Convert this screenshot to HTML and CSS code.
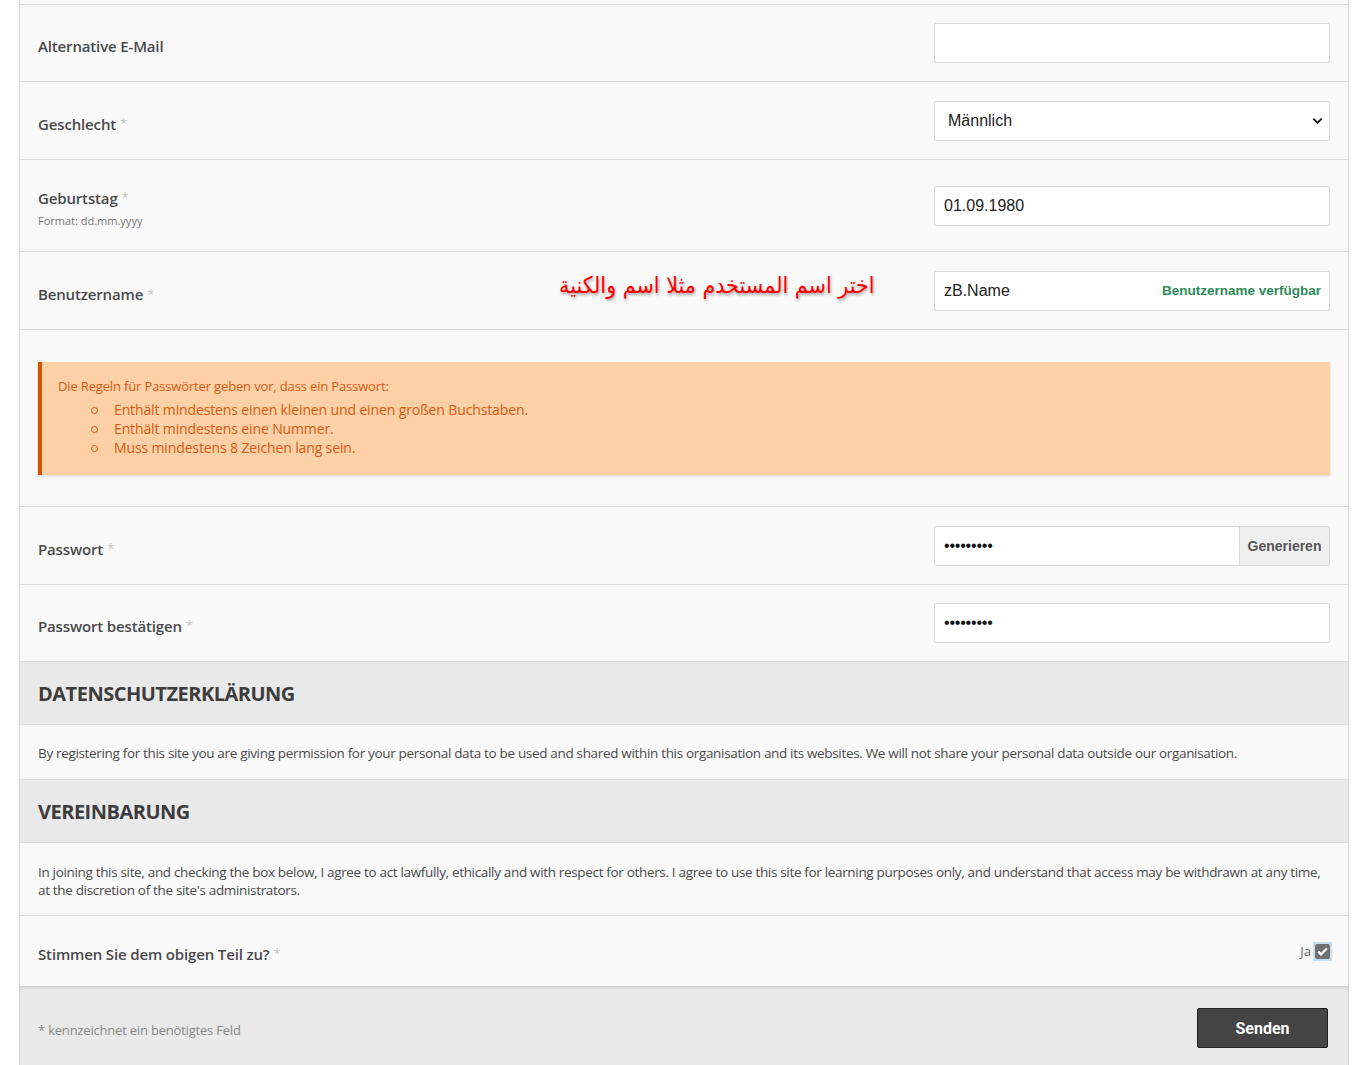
FILE: index.html
```html
<!DOCTYPE html>
<html lang="de">
<head>
<meta charset="utf-8">
<title>Registrierung</title>
<link rel="stylesheet" href="styles.css">
</head>
<body>
<div class="form">
  <div class="spacer"></div>
  <div class="row">
    <div class="label"><span class="lbl">Alternative E-Mail</span></div>
    <div class="field"><div class="input"></div></div>
  </div>
  <div class="row row-78">
    <div class="label"><span class="lbl">Geschlecht</span><span class="req">*</span></div>
    <div class="field"><div class="input select"><span>Männlich</span>
      <svg class="chev" width="12" height="8" viewBox="0 0 12 8"><path d="M1.5 1.5 L6 6 L10.5 1.5" fill="none" stroke="#111" stroke-width="2"/></svg></div></div>
  </div>
  <div class="row row-tall">
    <div class="label"><div><span class="lbl">Geburtstag</span><span class="req">*</span></div><div class="hint">Format: dd.mm.yyyy</div></div>
    <div class="field"><div class="input"><span>01.09.1980</span></div></div>
  </div>
  <div class="row row-78">
    <div class="label label-user"><span class="lbl">Benutzername</span><span class="req">*</span>
      <span class="arabic" dir="rtl">اختر اسم المستخدم مثلا اسم والكنية</span></div>
    <div class="field"><div class="input user"><span>zB.Name</span><span class="ok">Benutzername verfügbar</span></div></div>
  </div>
  <div class="row-alert">
    <div class="alert">
      <div class="alert-head">Die Regeln für Passwörter geben vor, dass ein Passwort:</div>
      <ul>
        <li>Enthält mindestens einen kleinen und einen großen Buchstaben.</li>
        <li>Enthält mindestens eine Nummer.</li>
        <li>Muss mindestens 8 Zeichen lang sein.</li>
      </ul>
    </div>
  </div>
  <div class="row row-78">
    <div class="label"><span class="lbl">Passwort</span><span class="req">*</span></div>
    <div class="field"><div class="input group"><span class="dots">•••••••••</span><span class="gen">Generieren</span></div></div>
  </div>
  <div class="row">
    <div class="label"><span class="lbl">Passwort bestätigen</span><span class="req">*</span></div>
    <div class="field"><div class="input"><span class="dots">•••••••••</span></div></div>
  </div>
  <div class="section-head">DATENSCHUTZERKLÄRUNG</div>
  <div class="section-text">By registering for this site you are giving permission for your personal data to be used and shared within this organisation and its websites. We will not share your personal data outside our organisation.</div>
  <div class="section-head">VEREINBARUNG</div>
  <div class="section-text two">In joining this site, and checking the box below, I agree to act lawfully, ethically and with respect for others. I agree to use this site for learning purposes only, and understand that access may be withdrawn at any time, at the discretion of the site's administrators.</div>
  <div class="row row-check">
    <div class="label"><span class="lbl">Stimmen Sie dem obigen Teil zu?</span><span class="req">*</span></div>
    <div class="check"><span class="ja">Ja</span><span class="cbwrap"><span class="cb"><svg width="11" height="9" viewBox="0 0 11 9"><path d="M1.2 4.6 L4 7.4 L9.8 1.4" fill="none" stroke="#fff" stroke-width="2.2"/></svg></span></span></div>
  </div>
  <div class="footer">
    <span class="note">* kennzeichnet ein benötigtes Feld</span>
    <span class="btn">Senden</span>
  </div>
</div>
</body>
</html>
```
FILE: styles.css
```css
* { box-sizing: border-box; }
html, body { margin: 0; padding: 0; background: #fff; }
body { font-family: "Open Sans", "Noto Sans", sans-serif; color: #444; }
.form {
  margin-left: 19px;
  width: 1330px;
  border-left: 1px solid #d6d6d6;
  border-right: 1px solid #d6d6d6;
  background: #f9f9f9;
  min-height: 1065px;
}
.spacer { height: 4px; }
.row {
  display: grid;
  grid-template-columns: 1fr 396px;
  align-items: center;
  border-top: 1px solid #dadada;
  padding: 18px 18px;
  min-height: 77px;
}
.row-78 { min-height: 78px; }
.row-tall { padding: 18px 18px; min-height: 92px; height: 92px; }
.label { padding-top: 6px; }
.lbl { font-size: 15px; font-weight: 600; color: #4a4a4a; letter-spacing: -0.15px; }
.req { font-size: 13px; color: #c4c4c4; margin-left: 4px; vertical-align: 2px; }
.hint { font-size: 11px; color: #777; margin-top: 4px; letter-spacing: 0; }
.row-tall .label { padding-top: 4px; }
.label-user { display: flex; align-items: center; padding-top: 0; }
.label-user .lbl { padding-top: 6px; }
.label-user .req { padding-top: 6px; }
.arabic {
  margin-left: auto;
  margin-right: 60px;
  margin-top: -12px;
  font-family: "DejaVu Sans", "Noto Sans", sans-serif;
  font-size: 23px;
  color: #ff0000;
  text-shadow: 1px 2px 3px rgba(0,0,0,0.35);
  transform: scaleX(0.9);
  transform-origin: right center;
}
.field { display: flex; }
.input {
  width: 396px;
  height: 40px;
  background: #fff;
  border: 1px solid #d9d9d9;
  border-radius: 2px;
  display: flex;
  align-items: center;
  padding: 0 9px;
  font-family: "Liberation Sans", Arial, sans-serif;
  font-size: 16px;
  color: #222;
}
.select { padding-left: 13px; justify-content: space-between; padding-right: 6px; }
.chev { width: 11px; }
.user { justify-content: space-between; padding-right: 8px; }
.ok { font-family: "Liberation Sans", Arial, sans-serif; font-weight: 700; font-size: 13.5px; color: #2e8b57; letter-spacing: 0; }
.group { padding-right: 0; justify-content: space-between; }
.dots { font-size: 16px; letter-spacing: -0.2px; color: #111; }
.gen {
  height: 38px;
  width: 90px;
  display: flex;
  align-items: center;
  justify-content: center;
  background: #efefef;
  border-left: 1px solid #d9d9d9;
  font-weight: 700;
  font-size: 14px;
  color: #555;
}
.row-alert { border-top: 1px solid #dadada; padding: 32px 18px 31px; }
.alert {
  background: #fed0a5;
  border-left: 4px solid #d35400;
  box-shadow: 0 1px 2px rgba(0,0,0,0.15);
  padding: 15px 16px 14px;
  color: #d95a14;
  height: 113px;
}
.alert-head { font-size: 13px; letter-spacing: -0.15px; line-height: 18px; }
.alert ul { margin: 5px 0 0; padding-left: 56px; list-style: none; font-size: 14px; line-height: 19px; letter-spacing: -0.13px; }
.alert li { position: relative; }
.alert li::before {
  content: "";
  position: absolute;
  left: -23px;
  top: 7px;
  width: 5px;
  height: 5px;
  border: 1px solid #d95a14;
  border-radius: 50%;
}
.section-head {
  background: #e9e9e9;
  border-top: 1px solid #dadada;
  height: 63px;
  padding: 0 18px;
  display: flex;
  align-items: center;
  font-size: 20px;
  font-weight: 700;
  color: #3d3d3d;
  letter-spacing: -0.5px;
}
.section-text {
  border-top: 1px solid #dadada;
  padding: 19px 18px 0;
  height: 55px;
  font-size: 13.5px;
  line-height: 18px;
  letter-spacing: -0.33px;
  color: #4a4a4a;
}
.section-text.two { height: 73px; padding-top: 20px; }
.row-check { min-height: 71px; padding: 15px 16px 15px 18px; }
.check { display: flex; justify-content: flex-end; align-items: center; margin-top: 0; }
.ja { font-size: 13px; color: #666; margin-right: 2px; }
.cbwrap { background: #c7dff5; padding: 2px; display: flex; }
.cb { width: 15px; height: 15px; background: #707070; border-radius: 2px; display: flex; align-items: center; justify-content: center; }
.footer {
  border-top: 1px solid #d0d0d0;
  box-shadow: inset 0 2px 2px rgba(0,0,0,0.06);
  background: #e9e9e9;
  height: 100px;
  display: flex;
  align-items: flex-start;
  justify-content: space-between;
  padding: 21px 20px 0 18px;
}
.note { font-size: 13px; color: #888; margin-top: 13px; letter-spacing: -0.2px; }
.btn {
  width: 131px;
  height: 40px;
  background: #444;
  border: 1px solid #222;
  border-radius: 2px;
  color: #fff;
  font-family: Roboto, "Liberation Sans", sans-serif;
  font-weight: 700;
  font-size: 16px;
  display: flex;
  align-items: center;
  justify-content: center;
}
```
